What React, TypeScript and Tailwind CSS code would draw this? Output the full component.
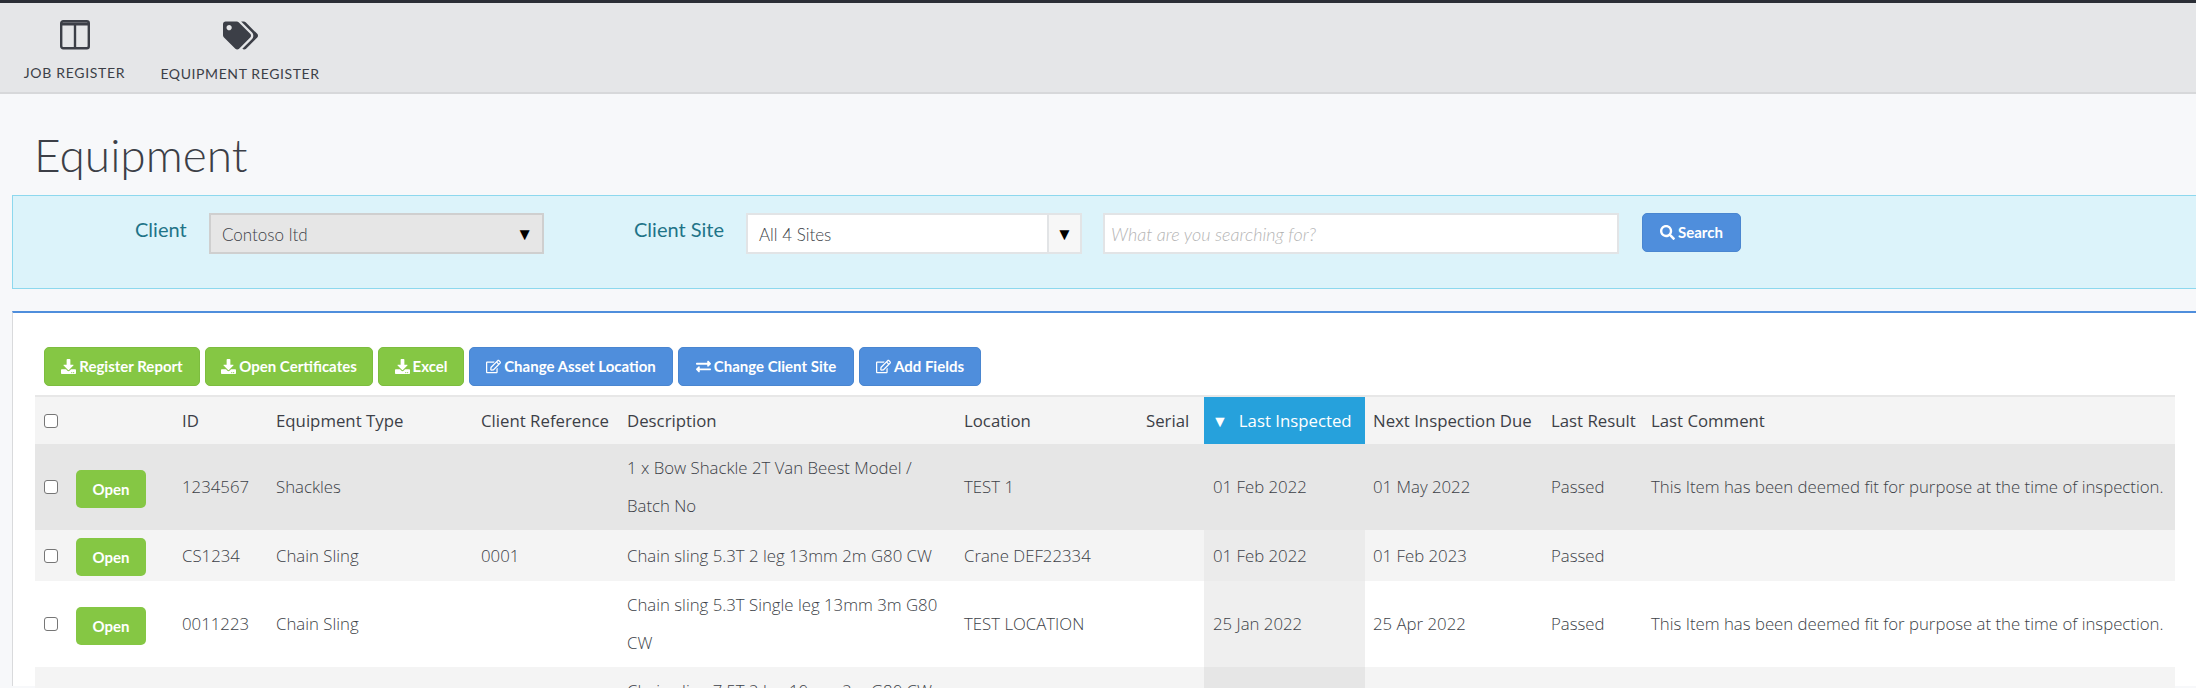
import { FaDownload, FaExchangeAlt, FaRegEdit, FaSearch, FaTags } from 'react-icons/fa';
import type { ReactNode } from 'react';

const SANS = "font-['Lato','Noto_Sans',sans-serif]";
const COMMENT = 'This Item has been deemed fit for purpose at the time of inspection.';

const rows = [
  {
    id: '1234567',
    type: 'Shackles',
    ref: '',
    desc: '1 x Bow Shackle 2T Van Beest Model / Batch No',
    loc: 'TEST 1',
    last: '01 Feb 2022',
    next: '01 May 2022',
    result: 'Passed',
    comment: COMMENT,
    rowBg: 'bg-[#e6e6e6]',
    sortBg: 'bg-[#e6e6e6]',
  },
  {
    id: 'CS1234',
    type: 'Chain Sling',
    ref: '0001',
    desc: 'Chain sling 5.3T 2 leg 13mm 2m G80 CW',
    loc: 'Crane DEF22334',
    last: '01 Feb 2022',
    next: '01 Feb 2023',
    result: 'Passed',
    comment: '',
    rowBg: 'bg-[#f4f4f4]',
    sortBg: 'bg-[#ebebeb]',
  },
  {
    id: '0011223',
    type: 'Chain Sling',
    ref: '',
    desc: 'Chain sling 5.3T Single leg 13mm 3m G80 CW',
    loc: 'TEST LOCATION',
    last: '25 Jan 2022',
    next: '25 Apr 2022',
    result: 'Passed',
    comment: COMMENT,
    rowBg: 'bg-white',
    sortBg: 'bg-[#efefef]',
  },
  {
    id: '',
    type: '',
    ref: '',
    desc: 'Chain sling 7.5T 2 leg 10mm 2m G80 CW',
    loc: '',
    last: '',
    next: '',
    result: '',
    comment: '',
    rowBg: 'bg-[#f4f4f4]',
    sortBg: 'bg-[#e6e6e6]',
  },
];

function ActionButton({
  color,
  width,
  icon,
  children,
}: {
  color: 'green' | 'blue';
  width: string;
  icon: ReactNode;
  children: ReactNode;
}) {
  const tone =
    color === 'green' ? 'bg-[#85c744] border-[#7dbd3f]' : 'bg-[#4f8edc] border-[#4a86d0]';
  return (
    <button
      className={`${tone} ${width} flex h-[39px] items-center justify-center gap-[3px] rounded-[5px] border text-[15px] font-bold whitespace-nowrap text-white`}
    >
      <span className="text-[15px]">{icon}</span>
      {children}
    </button>
  );
}

function Checkbox() {
  return <span className="block h-[14px] w-[14px] rounded-[3px] border border-[#767676] bg-white" />;
}

export default function App() {
  return (
    <div className={`${SANS} h-[688px] w-[2196px] overflow-hidden bg-[#f7f8fa] text-[#3c3f47]`}>
      <div className="h-[3px] bg-[#2b2e36]" />

      {/* Top nav */}
      <nav className="flex h-[91px] border-b-2 border-[#d7d8da] bg-[#e5e6e8]">
        <div className="ml-[23px] flex w-[103px] flex-col items-center pt-[17px]">
          <svg width="30" height="30" viewBox="0 0 30 30" fill="none" stroke="#3c3f47" strokeWidth="2.4">
            <rect x="1.2" y="1.2" width="27.6" height="27" rx="2" />
            <path d="M15 3v25" />
            <path d="M1.2 4h27.6" strokeWidth="3" />
          </svg>
          <span className="mt-[12px] text-[14px] tracking-[0.7px] whitespace-nowrap">JOB REGISTER</span>
        </div>
        <div className="ml-[34px] flex w-[160px] flex-col items-center pt-[15px]">
          <FaTags className="text-[35px] text-[#3c3f47]" />
          <span className="mt-[10px] text-[14px] tracking-[0.6px] whitespace-nowrap">EQUIPMENT REGISTER</span>
        </div>
      </nav>

      <h1 className="mt-[31px] ml-[34px] h-[70px] text-[46px] leading-[60px] font-light">Equipment</h1>

      {/* Filter panel */}
      <div className="ml-[12px] flex h-[94px] border-y border-l border-[#8dd8ee] bg-[#dcf3fa] pt-[17px]">
        <span className="ml-[122px] w-[74px] text-[20px] leading-[33px] text-[#1f7488]">Client</span>
        <div className="flex h-[41px] w-[335px] items-center justify-between border-2 border-[#cfcfcf] bg-[#e6e6e6] pr-[9px] pl-[11px] text-[17px] font-light">
          <span className="pt-[2px]">Contoso ltd</span>
          <span className="text-[17px] text-black">▼</span>
        </div>
        <span className="ml-[90px] w-[112px] text-[20px] leading-[33px] whitespace-nowrap text-[#1f7488]">Client Site</span>
        <div className="flex h-[41px] w-[336px] border-2 border-[#e2e4e6] bg-white text-[17px] font-light">
          <span className="flex-1 pt-[7px] pl-[11px]">All 4 Sites</span>
          <span className="flex w-[33px] items-center justify-center border-l-2 border-[#e2e4e6] bg-[#f7f7f7] text-[17px] text-black">
            ▼
          </span>
        </div>
        <div className="ml-[21px] flex h-[41px] w-[516px] items-center border-2 border-[#e2e4e6] bg-white pt-[2px] pl-[6px] text-[18px] font-light text-[#b5b5b5] italic">
          What are you searching for?
        </div>
        <button className="ml-[23px] flex h-[39px] w-[99px] items-center justify-center gap-[3px] rounded-[5px] border border-[#4a86d0] bg-[#4f8edc] text-[15px] font-bold text-white">
          <FaSearch className="text-[15px]" />
          Search
        </button>
      </div>

      {/* Register */}
      <div className="mt-[22px] ml-[12px] h-[375px] border-t-2 border-l border-t-[#4f8edc] border-l-[#d9dadc] bg-white pt-[34px] pr-[21px] pl-[22px]">
        <div className="ml-[9px] flex gap-[5px]">
          <ActionButton color="green" width="w-[156px]" icon={<FaDownload />}>Register Report</ActionButton>
          <ActionButton color="green" width="w-[168px]" icon={<FaDownload />}>Open Certificates</ActionButton>
          <ActionButton color="green" width="w-[86px]" icon={<FaDownload />}>Excel</ActionButton>
          <ActionButton color="blue" width="w-[204px]" icon={<FaRegEdit />}>Change Asset Location</ActionButton>
          <ActionButton color="blue" width="w-[176px]" icon={<FaExchangeAlt />}>Change Client Site</ActionButton>
          <ActionButton color="blue" width="w-[122px]" icon={<FaRegEdit />}>Add Fields</ActionButton>
        </div>

        <table className="mt-[9px] w-[2140px] table-fixed border-t-2 border-[#e7e7e7] text-left font-['Open_Sans',sans-serif] text-[16.8px]">
          <colgroup>
            <col className="w-[138px]" />
            <col className="w-[94px]" />
            <col className="w-[205px]" />
            <col className="w-[146px]" />
            <col className="w-[337px]" />
            <col className="w-[182px]" />
            <col className="w-[67px]" />
            <col className="w-[161px]" />
            <col className="w-[177px]" />
            <col className="w-[100px]" />
            <col />
          </colgroup>
          <thead>
            <tr className="h-[48px] bg-[#f4f4f4]">
              <th className="pl-[9px] font-normal"><Checkbox /></th>
              <th className="pl-[9px] font-normal">ID</th>
              <th className="pl-[9px] font-normal">Equipment Type</th>
              <th className="pl-[9px] font-normal whitespace-nowrap">Client Reference</th>
              <th className="pl-[9px] font-normal">Description</th>
              <th className="pl-[9px] font-normal">Location</th>
              <th className="pl-[9px] font-normal">Serial</th>
              <th className="bg-[#26a1dc] pl-[8px] font-normal whitespace-nowrap text-white">
                <span className="mr-[11px] text-[16px]">▼</span>Last Inspected
              </th>
              <th className="pl-[8px] font-normal whitespace-nowrap">Next Inspection Due</th>
              <th className="pl-[9px] font-normal whitespace-nowrap">Last Result</th>
              <th className="pl-[9px] font-normal">Last Comment</th>
            </tr>
          </thead>
          <tbody className="leading-[38px] font-light">
            {rows.map((row, i) => (
              <tr key={i} className={row.rowBg}>
                <td className="py-[5px] pl-[9px] align-middle">
                  {row.id && (
                    <div className="flex items-center gap-[18px]">
                      <Checkbox />
                      <button className={`${SANS} mt-[3px] flex h-[38px] w-[70px] items-center justify-center rounded-[5px] bg-[#85c744] text-[15px] font-bold text-white`}>
                        Open
                      </button>
                    </div>
                  )}
                </td>
                <td className="pl-[9px]">{row.id}</td>
                <td className="pl-[9px]">{row.type}</td>
                <td className="pl-[9px]">{row.ref}</td>
                <td className="py-[5px] pr-[8px] pl-[9px]">{row.desc}</td>
                <td className="pl-[9px]">{row.loc}</td>
                <td />
                <td className={`${row.sortBg} pl-[9px]`}>{row.last}</td>
                <td className="pl-[8px]">{row.next}</td>
                <td className="pl-[9px]">{row.result}</td>
                <td className="pl-[9px] whitespace-nowrap">{row.comment}</td>
              </tr>
            ))}
          </tbody>
        </table>
      </div>
    </div>
  );
}
